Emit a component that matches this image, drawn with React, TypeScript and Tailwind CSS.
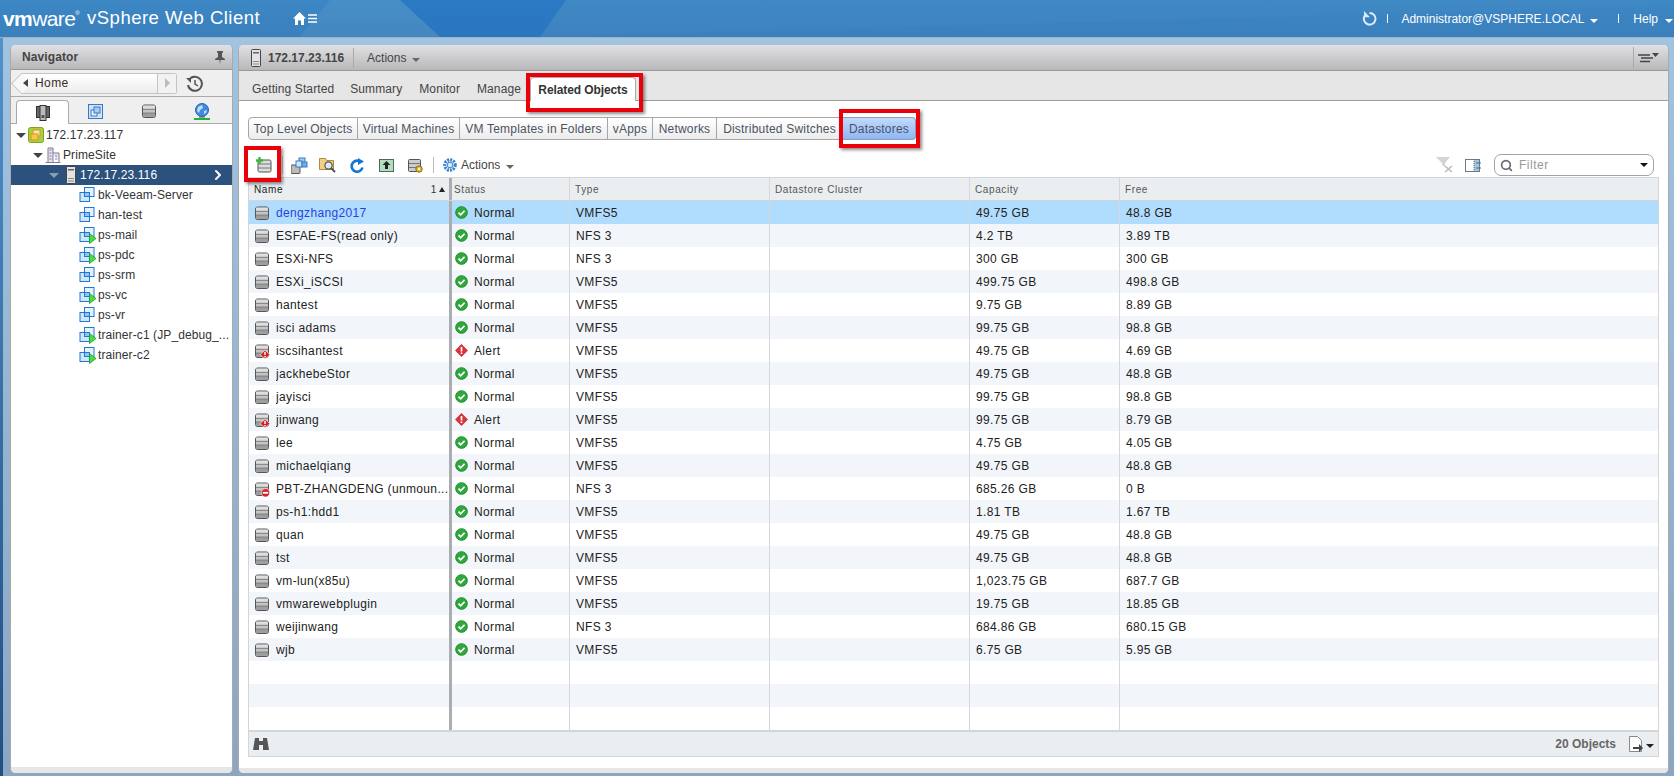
import { ChevronRight, Search } from "lucide-react";

const font = "font-['Liberation_Sans',Arial,sans-serif]";

type Row = {
  name: string;
  status: "Normal" | "Alert";
  type: string;
  cap: string;
  free: string;
  badge?: "alert" | "stop";
};

const rows: Row[] = [
  { name: "dengzhang2017", status: "Normal", type: "VMFS5", cap: "49.75 GB", free: "48.8 GB" },
  { name: "ESFAE-FS(read only)", status: "Normal", type: "NFS 3", cap: "4.2 TB", free: "3.89 TB" },
  { name: "ESXi-NFS", status: "Normal", type: "NFS 3", cap: "300 GB", free: "300 GB" },
  { name: "ESXi_iSCSI", status: "Normal", type: "VMFS5", cap: "499.75 GB", free: "498.8 GB" },
  { name: "hantest", status: "Normal", type: "VMFS5", cap: "9.75 GB", free: "8.89 GB" },
  { name: "isci adams", status: "Normal", type: "VMFS5", cap: "99.75 GB", free: "98.8 GB" },
  { name: "iscsihantest", status: "Alert", type: "VMFS5", cap: "49.75 GB", free: "4.69 GB", badge: "alert" },
  { name: "jackhebeStor", status: "Normal", type: "VMFS5", cap: "49.75 GB", free: "48.8 GB" },
  { name: "jayisci", status: "Normal", type: "VMFS5", cap: "99.75 GB", free: "98.8 GB" },
  { name: "jinwang", status: "Alert", type: "VMFS5", cap: "99.75 GB", free: "8.79 GB", badge: "alert" },
  { name: "lee", status: "Normal", type: "VMFS5", cap: "4.75 GB", free: "4.05 GB" },
  { name: "michaelqiang", status: "Normal", type: "VMFS5", cap: "49.75 GB", free: "48.8 GB" },
  { name: "PBT-ZHANGDENG (unmoun...", status: "Normal", type: "NFS 3", cap: "685.26 GB", free: "0 B", badge: "stop" },
  { name: "ps-h1:hdd1", status: "Normal", type: "VMFS5", cap: "1.81 TB", free: "1.67 TB" },
  { name: "quan", status: "Normal", type: "VMFS5", cap: "49.75 GB", free: "48.8 GB" },
  { name: "tst", status: "Normal", type: "VMFS5", cap: "49.75 GB", free: "48.8 GB" },
  { name: "vm-lun(x85u)", status: "Normal", type: "VMFS5", cap: "1,023.75 GB", free: "687.7 GB" },
  { name: "vmwarewebplugin", status: "Normal", type: "VMFS5", cap: "19.75 GB", free: "18.85 GB" },
  { name: "weijinwang", status: "Normal", type: "NFS 3", cap: "684.86 GB", free: "680.15 GB" },
  { name: "wjb", status: "Normal", type: "VMFS5", cap: "6.75 GB", free: "5.95 GB" },
];

const vms: { name: string; on: boolean }[] = [
  { name: "bk-Veeam-Server", on: false },
  { name: "han-test", on: false },
  { name: "ps-mail", on: true },
  { name: "ps-pdc", on: true },
  { name: "ps-srm", on: false },
  { name: "ps-vc", on: true },
  { name: "ps-vr", on: false },
  { name: "trainer-c1 (JP_debug_...", on: true },
  { name: "trainer-c2", on: true },
];

const subTabs = [
  { label: "Top Level Objects", w: "w-[110px]" },
  { label: "Virtual Machines", w: "w-[102px]" },
  { label: "VM Templates in Folders", w: "w-[148px]" },
  { label: "vApps", w: "w-[45px]" },
  { label: "Networks", w: "w-[64px]" },
  { label: "Distributed Switches", w: "w-[126px]" },
];

const mainTabs = [
  { label: "Getting Started", mr: "mr-[16px]" },
  { label: "Summary", mr: "mr-[17px]" },
  { label: "Monitor", mr: "mr-[17px]" },
  { label: "Manage", mr: "mr-[9px]" },
];

const Caret = ({ className = "border-t-[#666]" }: { className?: string }) => (
  <span className={`inline-block h-0 w-0 border-x-[4px] border-t-[4px] border-x-transparent ${className}`} />
);

const Disk = ({ badge }: { badge?: "alert" | "stop" }) => (
  <svg width="16" height="16" viewBox="0 0 16 16" className="shrink-0">
    <rect x="1.5" y="2" width="13" height="12.5" rx="2" fill="#b4b4b4" stroke="#555" />
    <rect x="2" y="2.6" width="12" height="3.4" fill="#dedede" />
    <rect x="2" y="6.6" width="12" height="3.2" fill="#c4c4c4" />
    <rect x="2" y="10.4" width="12" height="3.4" fill="#9d9d9d" />
    <path d="M2 6.3h12M2 10.1h12" stroke="#6e6e6e" strokeWidth=".8" />
    {badge === "alert" && (
      <>
        <path d="M11 6.8l5 5-5 4.2-5-4.2z" fill="#d3222a" stroke="#fff" strokeWidth=".7" />
        <path d="M11 8.8v3.2M11 13v1.4" stroke="#fff" strokeWidth="1.4" />
      </>
    )}
    {badge === "stop" && (
      <>
        <circle cx="11.5" cy="11.8" r="4.2" fill="#d3222a" stroke="#fff" strokeWidth=".6" />
        <path d="M8.8 11.8h5.4" stroke="#fff" strokeWidth="1.8" />
      </>
    )}
  </svg>
);

const Check = () => (
  <svg width="13" height="13" viewBox="0 0 14 14" className="shrink-0">
    <circle cx="7" cy="7" r="6.3" fill="#2ea83c" stroke="#1f8a2e" />
    <path d="M3.8 7.2l2.3 2.3 4.2-4.4" fill="none" stroke="#fff" strokeWidth="1.9" />
  </svg>
);

const AlertMark = () => (
  <svg width="13" height="13" viewBox="0 0 14 14" className="shrink-0">
    <path d="M7 .4l6.6 6.6L7 13.6.4 7z" fill="#d7353b" stroke="#b4262c" strokeWidth=".6" />
    <path d="M7 3.2v5M7 9.2v1.6" stroke="#fff" strokeWidth="1.8" />
  </svg>
);

const Vm = ({ on }: { on: boolean }) => (
  <svg width="18" height="18" viewBox="0 0 18 18" className="shrink-0">
    <rect x="5.5" y="1.5" width="9.5" height="9" fill="#e6f3fe" stroke="#1f78d6" />
    <rect x="1" y="6.5" width="9.5" height="9" fill="#cfe6fb" stroke="#1f78d6" />
    <rect x="5.5" y="6.5" width="5" height="4" fill="#8fc4f4" stroke="#1f78d6" />
    {on && <path d="M10.5 7.5l6.5 5-6.5 5z" fill="#4bdc46" stroke="#1e9b22" strokeWidth=".8" />}
  </svg>
);

const Server = ({ h = 18 }: { h?: number }) => (
  <svg width="10" height={h} viewBox="0 0 10 18" className="shrink-0">
    <rect x=".5" y=".5" width="9" height="17" rx="1" fill="#e3e3e3" stroke="#444" />
    <rect x="2" y="3" width="6" height="1.5" fill="#666" />
    <rect x="2" y="12" width="6" height="1" fill="#888" />
    <rect x="2" y="14.5" width="6" height="1" fill="#888" />
  </svg>
);

const Down = ({ className = "border-t-[#444]" }: { className?: string }) => (
  <span className={`inline-block h-0 w-0 shrink-0 border-x-[5px] border-t-[5px] border-x-transparent ${className}`} />
);

// red annotation drawn on the screenshot
const RedBox = ({ className }: { className: string }) => (
  <span className={`pointer-events-none absolute border-4 border-[#ea0009] shadow-[2px_2px_3px_rgba(0,0,0,0.45)] ${className}`} />
);

const Header = () => (
  <header className="relative flex h-[38px] shrink-0 items-center overflow-hidden border-b border-[#9fb0c0] bg-gradient-to-b from-[#3c87c4] to-[#3a80bd] text-white">
    <svg className="absolute inset-0 h-full w-full" viewBox="0 0 1674 38" preserveAspectRatio="none">
      <path d="M400 0h166l-26 38H440z" fill="#1668c4" opacity=".42" />
      <path d="M330 0h70l40 38H300z" fill="#fff" opacity=".06" />
      <path d="M566 0h1108v6L540 38z" fill="#fff" opacity=".02" />
    </svg>
    <div className="relative flex w-[87px] items-start pl-[3px] font-['Liberation_Sans',Arial,sans-serif] text-[21px] leading-none tracking-[-0.6px]">
      <span className="font-bold">vm</span>
      <span>ware</span>
      <span className="mt-[2px] text-[6px]">®</span>
    </div>
    <span className="relative text-[18.5px] leading-none tracking-[0.5px]">vSphere Web Client</span>
    <div className="relative ml-[33px] flex items-center gap-[2px]">
      <svg width="13" height="13" viewBox="0 0 13 13">
        <path d="M6.5 0L13 6.5h-2V13H8V8.5H5V13H2V6.5H0z" fill="#fff" />
      </svg>
      <svg width="9" height="9" viewBox="0 0 9 9">
        <path d="M0 1h9M0 4.5h9M0 8h9" stroke="#fff" strokeWidth="1.6" />
      </svg>
    </div>
    <div className="relative ml-auto flex items-center text-[12px]">
      <svg width="15" height="15" viewBox="0 0 15 15">
        <path d="M7.5 2A5.8 5.8 0 1 1 2.6 5" fill="none" stroke="#dcebf7" strokeWidth="2" />
        <path d="M2 0v6.2h6z" fill="#dcebf7" />
      </svg>
      <span className="ml-[10px] h-[9px] w-px bg-white" />
      <span className="ml-[13px]">Administrator@VSPHERE.LOCAL</span>
      <span className="ml-[6px]"><Caret className="border-t-white" /></span>
      <span className="ml-[20px] h-[9px] w-px bg-white" />
      <span className="ml-[14px]">Help</span>
      <span className="ml-[7px] mr-[1px]"><Caret className="border-t-white" /></span>
    </div>
  </header>
);

const TreeRow = ({ indent, children, sel }: { indent: string; children: React.ReactNode; sel?: boolean }) => (
  <div className={`flex h-5 items-center whitespace-nowrap ${indent} ${sel ? "bg-[#2b517c] text-white" : ""}`}>{children}</div>
);

const Navigator = () => (
  <aside className="mb-[3px] flex w-[223px] shrink-0 flex-col overflow-hidden rounded-[5px] border-x border-[#aaa] bg-white text-[12px] tracking-[0.1px] text-[#333]">
    <div className="flex h-[25px] shrink-0 items-center justify-between border-b border-[#999] bg-gradient-to-b from-[#e1e1e4] to-[#b8b8bb] pl-[11px] pr-[7px]">
      <span className="font-bold text-[#444]">Navigator</span>
      <svg width="10" height="13" viewBox="0 0 10 13">
        <path d="M2 0h6v1.5L7 2v4l3 2v1H5.6L5 13 4.4 9H0V8l3-2V2L2 1.5z" fill="#555" />
      </svg>
    </div>
    <div className="flex h-[27px] shrink-0 items-center border-b border-[#aaa] bg-[#efefef] pl-[10px]">
      <div className="relative flex h-[21px] w-[156px] items-center rounded-r-[3px] border-y border-r border-[#c4c4c4] bg-gradient-to-b from-white to-[#ececec]">
        <span className="absolute -left-[7px] top-[2px] h-[15px] w-[15px] rotate-45 border-b border-l border-[#c4c4c4] bg-[#f8f8f8]" />
        <span className="relative ml-[2px] h-0 w-0 border-y-[4px] border-r-[5px] border-y-transparent border-r-[#444]" />
        <span className="relative ml-[7px] flex-1 tracking-[0.4px] text-[#3a2a2a]">Home</span>
        <span className="flex h-full w-[19px] items-center justify-center border-l border-[#c4c4c4] bg-[#f2f2f2]">
          <span className="h-0 w-0 border-y-[5px] border-l-[5px] border-y-transparent border-l-[#bbb]" />
        </span>
      </div>
      <svg width="17" height="17" viewBox="0 0 17 17" className="ml-[9px]">
        <path d="M3 5a7 7 0 1 1-1 5" fill="none" stroke="#555" strokeWidth="2" />
        <path d="M0 3h5v5z" fill="#555" />
        <path d="M9 5v4l3 2" fill="none" stroke="#555" strokeWidth="1.5" />
      </svg>
    </div>
    <div className="flex h-[27px] shrink-0 items-end border-b border-[#aaa] bg-[#efefef] pl-[5px]">
      <div className="flex h-[24px] w-[53px] translate-y-px items-center justify-center rounded-t-[4px] border border-b-0 border-[#aaa] bg-white">
        <svg width="14" height="16" viewBox="0 0 14 16">
          <rect x=".5" y="1.5" width="4" height="11" fill="#666" stroke="#333" />
          <rect x="9.5" y="1.5" width="4" height="11" fill="#666" stroke="#333" />
          <rect x="4" y=".5" width="6" height="15" fill="#bbb" stroke="#333" />
          <rect x="5.5" y="10" width="3" height="3" fill="#555" />
        </svg>
      </div>
      <div className="flex h-[24px] w-[53px] items-center justify-center">
        <svg width="15" height="15" viewBox="0 0 15 15">
          <rect x=".5" y=".5" width="14" height="14" fill="#cfe4f8" stroke="#3a78c2" />
          <rect x="3" y="6" width="6" height="6" fill="#e7f2fc" stroke="#3a78c2" />
          <rect x="6" y="3" width="6" height="6" fill="#a5cdf2" stroke="#3a78c2" />
        </svg>
      </div>
      <div className="flex h-[24px] w-[53px] items-center justify-center">
        <Disk />
      </div>
      <div className="flex h-[24px] w-[53px] items-center justify-center">
        <svg width="16" height="17" viewBox="0 0 16 17">
          <circle cx="8" cy="7" r="6.5" fill="#3f8be0" stroke="#2a63b0" />
          <path d="M4 4l4-2 1 3-3 2-1 3-2-2zM10 8l3-1-1 3-2 1z" fill="#bfe0fa" />
          <path d="M5 14h6" stroke="#555" />
          <rect x="0" y="15" width="16" height="2" fill="#1fb33c" />
        </svg>
      </div>
    </div>
    <div className="flex-1 pt-[1px]">
      <TreeRow indent="pl-[5px]">
        <Down />
        <svg width="16" height="16" viewBox="0 0 16 16" className="ml-[2px] shrink-0">
          <rect x=".5" y=".5" width="15" height="15" rx="2" fill="#a9cf3f" stroke="#7da22a" />
          <rect x="5" y="3" width="7" height="6" fill="#f4e8b0" stroke="#d99a1c" />
          <rect x="3" y="7" width="7" height="6" fill="#f7c64b" stroke="#d99a1c" />
        </svg>
        <span className="ml-[2px]">172.17.23.117</span>
      </TreeRow>
      <TreeRow indent="pl-[22px]">
        <Down />
        <svg width="16" height="16" viewBox="0 0 16 16" className="ml-[2px] shrink-0">
          <path d="M.5 15.5h15M3 15V1h5v14M8 6h6v9" fill="#e8e6ef" stroke="#7d7a92" />
          <path d="M4.5 3h2M4.5 6h2M4.5 9h2M4.5 12h2M10 9h2M10 12h2" stroke="#7d7a92" />
        </svg>
        <span className="ml-[2px]">PrimeSite</span>
      </TreeRow>
      <TreeRow indent="pl-[38px] pr-[6px]" sel>
        <Down className="border-t-[#8a9cb3]" />
        <span className="ml-[7px]"><Server /></span>
        <span className="ml-[4px] flex-1">172.17.23.116</span>
        <ChevronRight size={16} strokeWidth={3} className="text-white" />
      </TreeRow>
      {vms.map((v) => (
        <TreeRow key={v.name} indent="pl-[68px]">
          <Vm on={v.on} />
          <span className="ml-[1px]">{v.name}</span>
        </TreeRow>
      ))}
    </div>
    <div className="h-[6px] shrink-0 bg-[#e6e6e6]" />
  </aside>
);

const cell = "flex h-full items-center border-r border-[#d4d7db]";

const Table = () => (
  <div className="mx-[9px] flex shrink-0 flex-col border border-[#d3d6d9] text-[12px] tracking-[0.35px] text-[#222]">
    <div className="flex h-[23px] shrink-0 items-center border-b border-[#d3d6d9] bg-[#ebeef1] text-[10px] tracking-[0.6px] text-[#555]">
      <div className="flex h-full w-[200px] items-center justify-between pl-[5px] pr-[4px] font-bold text-[#333]">
        <span className="font-normal text-[#222]">Name</span>
        <span className="flex items-center gap-[2px] font-normal">
          1
          <span className="h-0 w-0 border-x-[3px] border-b-[5px] border-x-transparent border-b-[#222]" />
        </span>
      </div>
      <div className="h-full w-[3px] bg-[#aaaeb2]" />
      <div className={`${cell} w-[118px] pl-[2px]`}>Status</div>
      <div className={`${cell} w-[200px] pl-[5px]`}>Type</div>
      <div className={`${cell} w-[200px] pl-[5px]`}>Datastore Cluster</div>
      <div className={`${cell} w-[150px] pl-[5px]`}>Capacity</div>
      <div className="flex-1 pl-[5px]">Free</div>
    </div>
    {Array.from({ length: 23 }).map((_, i) => {
      const r: Row | undefined = rows[i];
      const bg = i === 0 ? "bg-[#b0ddfe]" : i % 2 === 1 ? "bg-[#f2f6fa]" : "bg-white";
      return (
        <div key={i} className={`flex h-[23px] shrink-0 items-center ${bg}`}>
          <div className="flex h-full w-[200px] items-center pl-[5px]">
            {r && <Disk badge={r.badge} />}
            {r && (
              <span className={`ml-[6px] truncate ${i === 0 ? "text-[#2a3fe0]" : ""}`}>{r.name}</span>
            )}
          </div>
          <div className="h-full w-[3px] bg-[#aaaeb2]" />
          <div className={`${cell} w-[118px] pl-[3px]`}>
            {r && (r.status === "Alert" ? <AlertMark /> : <Check />)}
            {r && <span className="ml-[6px]">{r.status}</span>}
          </div>
          <div className={`${cell} w-[200px] pl-[6px]`}>{r?.type}</div>
          <div className={`${cell} w-[200px]`} />
          <div className={`${cell} w-[150px] pl-[6px]`}>{r?.cap}</div>
          <div className="flex-1 pl-[6px]">{r?.free}</div>
        </div>
      );
    })}
    <div className="flex h-[26px] shrink-0 items-center justify-between border-t-2 border-[#d3d6d9] bg-[#ebeef1] pl-[4px] pr-[4px]">
      <svg width="16" height="14" viewBox="0 0 16 14">
        <path d="M2 1h4v3h4V1h4l2 12h-6V8H6v5H0z" fill="#555" />
      </svg>
      <div className="flex items-center">
        <span className="font-bold tracking-normal text-[#666]">20 Objects</span>
        <svg width="14" height="16" viewBox="0 0 14 16" className="ml-[13px]">
          <path d="M.5.5h8l4 4v11H.5z" fill="#fff" stroke="#888" />
          <path d="M4 11h6V8l4 4-4 4v-3H4z" fill="#444" />
        </svg>
        <span className="ml-[3px]"><Caret className="border-t-[#222]" /></span>
      </div>
    </div>
  </div>
);

const Toolbar = () => (
  <div className="mx-[9px] flex h-[32px] shrink-0 items-center pl-[8px] pr-[5px] pt-[8px] text-[12px] text-[#444]">
    <span className="relative flex w-[26px] items-center">
      <svg width="16" height="16" viewBox="0 0 16 16">
        <rect x="2" y="3" width="13" height="12" rx="1.5" fill="#ddd" stroke="#555" />
        <path d="M2 7h13M2 11h13" stroke="#777" />
        <path d="M3.5 0v7M0 3.5h7" stroke="#3cb83c" strokeWidth="2.4" />
      </svg>
      <RedBox className="-left-[12px] -top-[11px] h-[36px] w-[37px]" />
    </span>
    <span className="h-[18px] w-px bg-[#ccc]" />
    <svg width="17" height="17" viewBox="0 0 17 17" className="ml-[8px]">
      <rect x="0" y="8" width="9" height="8.5" rx="1" fill="#bbb" stroke="#555" />
      <rect x="8" y="1" width="6" height="6" fill="#9ccaf6" stroke="#3a78c2" />
      <rect x="5" y="4" width="6" height="6" fill="#cfe6fb" stroke="#3a78c2" />
      <rect x="11" y="5" width="5" height="5" fill="#6aaeee" stroke="#3a78c2" />
    </svg>
    <svg width="17" height="16" viewBox="0 0 17 16" className="ml-[11px]">
      <path d="M.5 3V1.5h6l1 2h7v9H.5z" fill="#f1cf87" stroke="#b58a36" />
      <circle cx="9.5" cy="8.5" r="3.6" fill="#d7ebf7" stroke="#555" strokeWidth="1.2" />
      <path d="M12 11l4 4" stroke="#555" strokeWidth="2" />
    </svg>
    <svg width="15" height="15" viewBox="0 0 15 15" className="ml-[14px]">
      <path d="M12.5 9.5A5.5 5.5 0 1 1 9 3" fill="none" stroke="#1476d2" strokeWidth="2.6" />
      <path d="M8 0l6 3.5L8 7z" fill="#1476d2" />
    </svg>
    <svg width="15" height="13" viewBox="0 0 15 13" className="ml-[14px]">
      <rect x=".5" y=".5" width="14" height="12" fill="#b5dcc0" stroke="#4c6b58" />
      <path d="M7.5 2L11.5 6H9v4H6V6H3.5z" fill="#222" />
    </svg>
    <svg width="15" height="15" viewBox="0 0 15 15" className="ml-[14px]">
      <rect x=".5" y="1.5" width="12" height="12" rx="1" fill="#ccc" stroke="#555" />
      <path d="M1 5.5h11M1 9.5h11" stroke="#777" />
      <circle cx="11" cy="11" r="3.2" fill="#e0b93a" stroke="#886a14" />
      <circle cx="11" cy="11" r="1" fill="#fff" />
    </svg>
    <span className="ml-[10px] h-[16px] w-px bg-[#bbb]" />
    <svg width="16" height="16" viewBox="0 0 16 16" className="ml-[8px]">
      <circle cx="8" cy="8" r="5.2" fill="none" stroke="#3a80d0" strokeWidth="3.2" strokeDasharray="2 1" />
      <circle cx="8" cy="8" r="2.8" fill="#d9ebfa" stroke="#3a80d0" />
    </svg>
    <span className="ml-[3px]">Actions</span>
    <span className="ml-[6px]"><Caret /></span>
    <div className="ml-auto flex items-center">
      <svg width="17" height="16" viewBox="0 0 17 16">
        <path d="M0 0h14L9 6v4L6 8V6z" fill="#d4d4d4" />
        <path d="M9 9l7 6M16 9l-7 6" stroke="#bbb" strokeWidth="1.6" />
      </svg>
      <svg width="17" height="13" viewBox="0 0 17 13" className="ml-[12px]">
        <rect x=".5" y=".5" width="14" height="12" fill="#fff" stroke="#6b7a88" />
        <rect x="9" y="1" width="5" height="11" fill="#b8c0c8" />
        <path d="M9 0v13" stroke="#1476d2" strokeDasharray="1 1" />
        <path d="M11 4h5M11 9h5" stroke="#1476d2" strokeWidth="1.2" />
      </svg>
      <div className="ml-[12px] flex h-[22px] w-[160px] items-center rounded-[7px] border border-[#a3a3a3] bg-white pl-[5px] pr-[5px] tracking-[0.5px]">
        <Search size={13} strokeWidth={3} className="text-[#666]" />
        <span className="ml-[6px] flex-1 text-[#999]">Filter</span>
        <span className="h-0 w-0 border-x-[4px] border-t-[4px] border-x-transparent border-t-[#111]" />
      </div>
    </div>
  </div>
);

export default function App() {
  return (
    <div className={`flex h-[776px] w-[1674px] flex-col overflow-hidden bg-gradient-to-b from-[#a3c5e2] to-[#8ba6c1] ${font}`}>
      <Header />
      <div className="flex min-h-0 flex-1">
        <div className="w-[3px] shrink-0 bg-gradient-to-b from-[#4f92cc] to-[#1f4f85]" />
        <div className="flex min-w-0 flex-1 gap-[5px] pt-[7px] pr-[5px] pl-[7px]">
          <Navigator />
          <main className="mb-[3px] flex min-w-0 flex-1 flex-col overflow-hidden rounded-[5px] border-x border-[#aaa] bg-white">
            <div className="flex h-[26px] shrink-0 items-center border-b border-[#999] bg-gradient-to-b from-[#e1e1e4] to-[#b8b8bb] pl-[12px] pr-[9px] text-[12px] text-[#444]">
              <Server />
              <span className="ml-[7px] font-bold">172.17.23.116</span>
              <span className="ml-[9px] h-[20px] w-px bg-[#aaa]" />
              <span className="ml-[13px]">Actions</span>
              <span className="ml-[6px]"><Caret /></span>
              <div className="ml-auto flex h-[22px] items-center border-l border-[#aaa] pl-[4px]">
                <svg width="21" height="10" viewBox="0 0 21 10">
                  <path d="M0 2h12M3 5h12M2 8.5h10" stroke="#444" strokeWidth="1.6" />
                  <path d="M14 0h7l-3.5 4z" fill="#444" />
                </svg>
              </div>
            </div>
            <div className="flex h-[30px] shrink-0 items-end border-b border-[#a0a0a0] bg-[#e6e6e6] pl-[13px] text-[12px] tracking-[0.1px] text-[#444]">
              {mainTabs.map((t) => (
                <span key={t.label} className={`flex h-[22px] items-center ${t.mr}`}>{t.label}</span>
              ))}
              <div className="relative flex h-[24px] w-[106px] translate-y-px items-center justify-center rounded-t-[4px] border border-b-0 border-[#aaa] bg-white font-bold tracking-[-0.1px] text-[#333]">
                Related Objects
                <RedBox className="-top-[5px] -left-[5px] h-[39px] w-[117px]" />
              </div>
            </div>
            <div className="mx-[9px] mt-[16px] flex h-[23px] shrink-0 text-[12px] tracking-[0.2px] text-[#4b5463]">
              {subTabs.map((t, i) => (
                <div
                  key={t.label}
                  className={`flex h-full items-center justify-center border-y border-r border-[#a6a6a6] bg-gradient-to-b from-white to-[#ececec] whitespace-nowrap ${t.w} ${i === 0 ? "rounded-l-[4px] border-l" : ""}`}
                >
                  {t.label}
                </div>
              ))}
              <div className="relative flex h-full w-[73px] items-center justify-center rounded-r-[4px] border-y border-r border-[#8f9bb0] bg-gradient-to-b from-[#c2d9fa] to-[#8db7f7]">
                Datastores
                <RedBox className="-top-[9px] -left-[4px] h-[39px] w-[81px]" />
              </div>
            </div>
            <div className="mt-[5px] flex min-h-0 flex-1 flex-col">
              <Toolbar />
              <Table />
              <div className="flex-1" />
              <div className="h-[5px] shrink-0 bg-[#e6e6e6]" />
            </div>
          </main>
        </div>
      </div>
    </div>
  );
}
